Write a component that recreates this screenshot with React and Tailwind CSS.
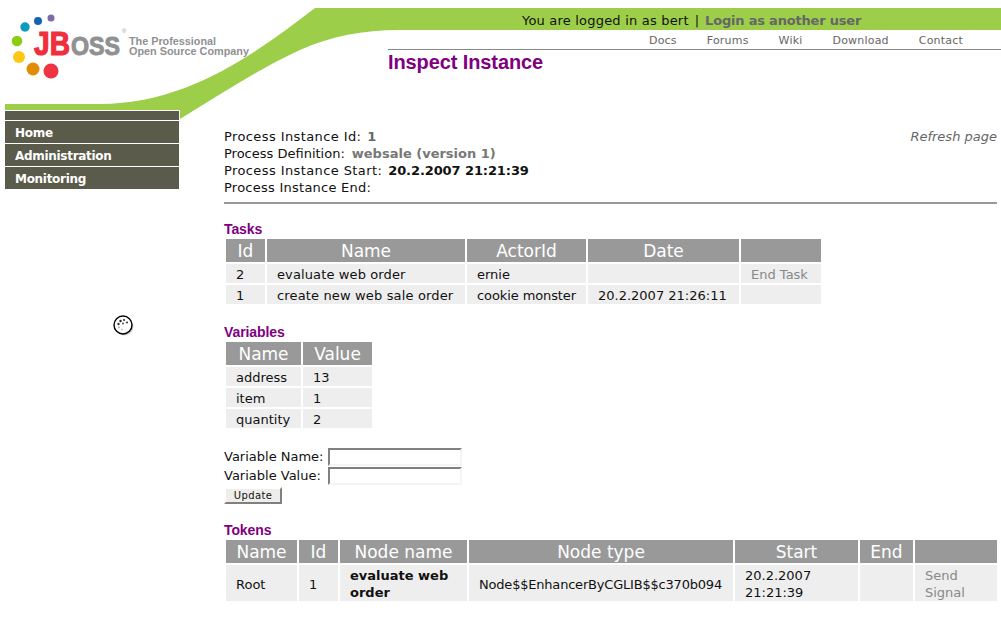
function Th({ w, children }) {
  return <th style={{ width: w }} className="bg-[#999999] text-white font-normal text-[17px] leading-[21px] h-[23px] p-0 pt-[2px] text-center whitespace-nowrap">{children}</th>;
}
function Td({ children, className = "" }) {
  return <td className={"bg-[#eeeeee] text-[13px] leading-[17px] px-[10px] pt-[2px] pb-0 text-[#111111] " + className}>{children}</td>;
}
function Heading({ children, className = "" }) {
  return <h3 className={"font-['Liberation_Sans',sans-serif] font-bold text-[14px] tracking-[-0.1px] leading-[14px] text-[#800080] " + className}>{children}</h3>;
}
function DataTable({ width, children }) {
  return (
    <table style={{ width }} className="table-fixed border-separate [border-spacing:2px] mt-px">{children}</table>
  );
}
function Swoosh() {
  return (
    <svg className="absolute left-0 top-0" width="1001" height="125" viewBox="0 0 1001 125">
      <path fill="#9dce4a" d="M315 8H1001V30H400C362 30 332 36 300 50C260 68 220 95 180 119V110H5V104H100C190 104 260 50 315 8Z" />
      <circle cx="51" cy="18" r="3.5" fill="#7d68ad" />
      <circle cx="38" cy="21" r="4" fill="#1265b5" />
      <circle cx="25" cy="27" r="4.7" fill="#0f9ac2" />
      <circle cx="17" cy="41" r="5.3" fill="#8ccc12" />
      <circle cx="19" cy="57" r="6" fill="#fcc815" />
      <circle cx="33" cy="69" r="6.5" fill="#e08c06" />
      <circle cx="51" cy="71" r="7.5" fill="#ef3340" />
      <text x="34" y="55" fontFamily="'Liberation Sans',sans-serif" fontWeight="900" fontSize="33" fill="#ef2f3c" textLength="36" lengthAdjust="spacingAndGlyphs" stroke="#ef2f3c" strokeWidth="1.2">JB</text>
      <text x="71" y="54.5" fontFamily="'Liberation Sans',sans-serif" fontWeight="900" fontSize="25" fill="#8f9193" textLength="49" lengthAdjust="spacingAndGlyphs" stroke="#8f9193" strokeWidth="1">OSS</text>
      <text x="122" y="33" fontFamily="'Liberation Sans',sans-serif" fontSize="6" fill="#999999">®</text>
      <text x="129" y="45" fontFamily="'Liberation Sans',sans-serif" fontWeight="700" fontSize="10.5" fill="#8f9193" textLength="87" lengthAdjust="spacingAndGlyphs">The Professional</text>
      <text x="129" y="55" fontFamily="'Liberation Sans',sans-serif" fontWeight="700" fontSize="10.5" fill="#8f9193" textLength="120" lengthAdjust="spacingAndGlyphs">Open Source Company</text>
    </svg>
  );
}
function Cursor() {
  return (
    <svg className="absolute left-[112px] top-[314px]" width="24" height="24" viewBox="0 0 24 24">
      <circle cx="12.5" cy="12.5" r="9" fill="#00000033" />
      <circle cx="11" cy="11" r="9" fill="#ffffff" stroke="#000000" strokeWidth="1.4" />
      <circle cx="6.5" cy="10" r="1.2" fill="#333" />
      <circle cx="8.5" cy="7" r="1.2" fill="#222" />
      <circle cx="12" cy="6" r="1.1" fill="#333" />
      <circle cx="15" cy="8.5" r="1.1" fill="#444" />
      <circle cx="11" cy="9.5" r="1" fill="#555" />
      <circle cx="7" cy="13.5" r="1.1" fill="#bbb" />
      <circle cx="10" cy="15.5" r="1.1" fill="#ccc" />
    </svg>
  );
}
const nav = ["Home", "Administration", "Monitoring"];
export default function App() {
  return (
    <div className="relative w-[1001px] h-[627px] overflow-hidden bg-white font-['DejaVu_Sans',sans-serif] text-[13px] text-[#111111]">
      <header className="relative h-[110px]">
        <Swoosh />
        <div className="relative ml-[388px] pt-[8px]">
          <div className="h-[22px] flex items-center pl-[134px] pt-[3px] leading-[19px] whitespace-nowrap">
            <span className="tracking-[0.2px]">You are logged in as bert</span>
            <span className="mx-[6px]">|</span>
            <a className="font-bold tracking-[-0.2px] text-[#666666]">Login as another user</a>
          </div>
          <nav className="h-[20px] pt-[4px] border-b border-b-[#888888] flex items-center pl-[261px] text-[11px] tracking-[0.2px] text-[#666666] gap-[30px]">
            <a>Docs</a><a>Forums</a><a>Wiki</a><a>Download</a><a>Contact</a>
          </nav>
          <h1 className="font-['Liberation_Sans',sans-serif] font-bold text-[20px] tracking-[-0.1px] leading-[24px] text-[#800080]">Inspect Instance</h1>
        </div>
      </header>
      <div className="flex">
        <aside className="w-[174px] ml-[5px] shrink-0 flex flex-col gap-px pt-px">
          <div className="h-[9px] bg-[#5b5b4b]" />
          {nav.map((n) => (
            <a key={n} className="h-[22px] bg-[#5b5b4b] text-white font-bold text-[12px] tracking-[-0.3px] leading-[24px] pl-[10px]">{n}</a>
          ))}
        </aside>
        <main className="ml-[45px] w-[773px] pt-[18px]">
          <div className="relative leading-[17px]">
            <a className="absolute right-0 top-0 italic text-[#666666]">Refresh page</a>
            <div><span className="tracking-[0.4px]">Process Instance Id:</span><b className="ml-[6px] text-[#666666]">1</b></div>
            <div>Process Definition:<b className="ml-[7px] text-[#777777]">websale (version 1)</b></div>
            <div><span className="tracking-[0.4px]">Process Instance Start:</span><b className="ml-[6px] tracking-[-0.1px]">20.2.2007 21:21:39</b></div>
            <div className="tracking-[0.25px]">Process Instance End:</div>
          </div>
          <hr className="mt-[6px] border-t-2 border-t-[#999999]" />
          <Heading className="mt-[18px]">Tasks</Heading>
          <DataTable width={599}>
            <thead><tr><Th w={39}>Id</Th><Th w={198}>Name</Th><Th w={119}>ActorId</Th><Th w={151}>Date</Th><Th w={80}></Th></tr></thead>
            <tbody>
              <tr><Td>2</Td><Td className="tracking-[0.12px]">evaluate web order</Td><Td>ernie</Td><Td></Td><Td className="text-[#888888]">End Task</Td></tr>
              <tr><Td>1</Td><Td className="whitespace-nowrap tracking-[0.15px]">create new web sale order</Td><Td className="whitespace-nowrap tracking-[-0.1px]">cookie monster</Td><Td className="whitespace-nowrap">20.2.2007 21:26:11</Td><Td></Td></tr>
            </tbody>
          </DataTable>
          <Heading className="mt-[19px]">Variables</Heading>
          <DataTable width={150}>
            <thead><tr><Th w={75}>Name</Th><Th w={69}>Value</Th></tr></thead>
            <tbody>
              <tr><Td>address</Td><Td>13</Td></tr>
              <tr><Td>item</Td><Td>1</Td></tr>
              <tr><Td>quantity</Td><Td>2</Td></tr>
            </tbody>
          </DataTable>
          <form className="mt-[17px] w-[238px]">
            <label className="flex items-center h-[19px] justify-between">Variable Name: <input className="w-[134px] h-[18px] border-2 border-[#f4f4f4] border-t-[#808080] border-l-[#808080] bg-white" /></label>
            <label className="flex items-center h-[19px] justify-between">Variable Value: <input className="w-[134px] h-[18px] border-2 border-[#f4f4f4] border-t-[#808080] border-l-[#808080] bg-white" /></label>
            <button type="button" className="block mt-[2px] w-[58px] h-[17px] text-[10px] leading-[13px] tracking-[0.4px] bg-[#f0eeea] border-2 border-white border-r-[#808080] border-b-[#808080]">Update</button>
          </form>
          <Heading className="mt-[19px]">Tokens</Heading>
          <DataTable width={775}>
            <thead><tr><Th w={71}>Name</Th><Th w={39}>Id</Th><Th w={127}>Node name</Th><Th w={264}>Node type</Th><Th w={123}>Start</Th><Th w={53}>End</Th><Th w={82}></Th></tr></thead>
            <tbody>
              <tr>
                <Td>Root</Td><Td>1</Td><Td className="font-bold">evaluate web order</Td>
                <Td className="whitespace-nowrap tracking-[-0.2px]">Node$$EnhancerByCGLIB$$c370b094</Td>
                <Td>20.2.2007 21:21:39</Td><Td></Td><Td className="text-[#888888]">Send Signal</Td>
              </tr>
            </tbody>
          </DataTable>
        </main>
      </div>
      <Cursor />
    </div>
  );
}
